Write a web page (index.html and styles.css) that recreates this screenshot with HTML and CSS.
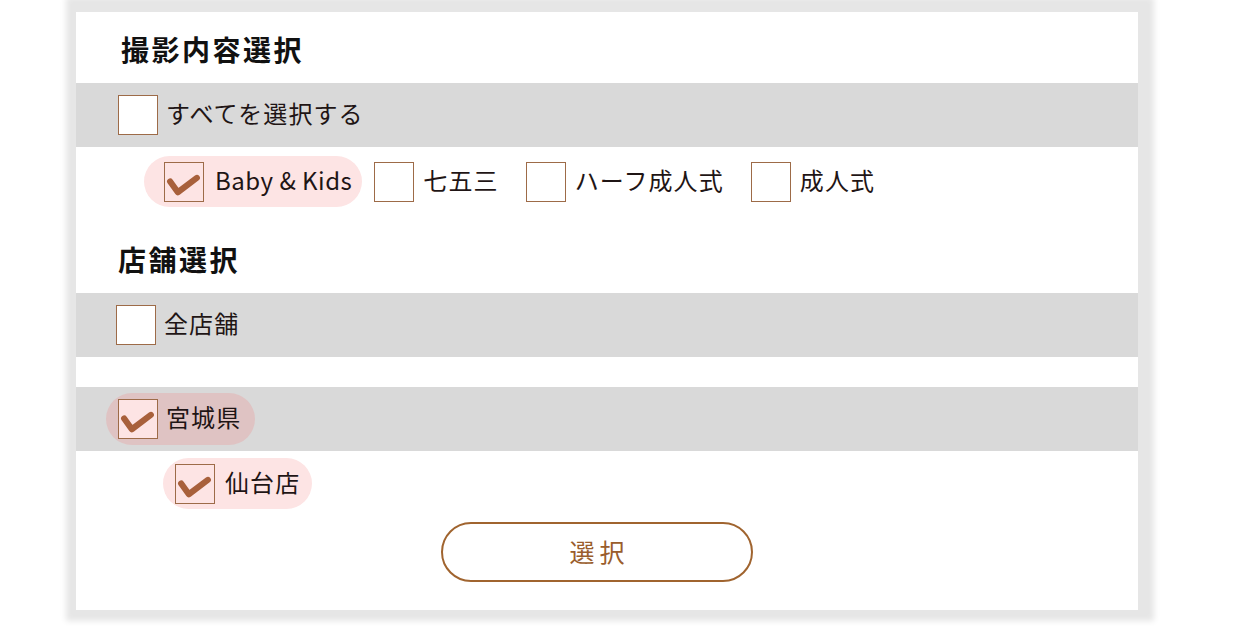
FILE: index.html
```html
<!DOCTYPE html>
<html lang="ja">
<head>
<meta charset="utf-8">
<link rel="stylesheet" href="styles.css">
</head>
<body>
<div class="panel">
  <h2 class="title t1">撮影内容選択</h2>
  <div class="band band-all">
    <label class="opt">
      <span class="box"></span><span class="txt">すべてを選択する</span>
    </label>
  </div>
  <div class="opts">
    <label class="opt on pill-baby">
      <span class="box on"><svg viewBox="0 0 37 37"><path d="M5 18 L12.5 28.5 L31 14.5"/></svg></span><span class="txt latin">Baby &amp; Kids</span>
    </label>
    <label class="opt plain">
      <span class="box"></span><span class="txt">七五三</span>
    </label>
    <label class="opt plain">
      <span class="box"></span><span class="txt">ハーフ成人式</span>
    </label>
    <label class="opt plain">
      <span class="box"></span><span class="txt">成人式</span>
    </label>
  </div>

  <h2 class="title t2">店舗選択</h2>
  <div class="band band-shops">
    <label class="opt">
      <span class="box"></span><span class="txt">全店舗</span>
    </label>
  </div>
  <div class="spacer"></div>
  <div class="band band-pref">
    <label class="opt on dark pill-pref">
      <span class="box on"><svg viewBox="0 0 37 37"><path d="M5 18 L12.5 28.5 L31 14.5"/></svg></span><span class="txt">宮城県</span>
    </label>
  </div>
  <div class="shop-row">
    <label class="opt on pill-shop">
      <span class="box on"><svg viewBox="0 0 37 37"><path d="M5 18 L12.5 28.5 L31 14.5"/></svg></span><span class="txt">仙台店</span>
    </label>
  </div>
  <div class="actions">
    <button class="submit">選択</button>
  </div>
</div>
</body>
</html>
```

FILE: styles.css
```css
* { box-sizing: border-box; }
html, body { margin: 0; padding: 0; background: #ffffff; }
body {
  font-family: "Noto Sans CJK JP", "Noto Sans", sans-serif;
  color: #1f1515;
  padding: 12px 0 0 76px;
  height: 626px;
  overflow: hidden;
}
.panel {
  width: 1062px;
  height: 598px;
  background: #ffffff;
  box-shadow: 3px -2px 6px 13px #e6e6e6;
  display: flex;
  flex-direction: column;
}
.title {
  margin: 0;
  font-size: 28px;
  line-height: 28px;
  font-weight: 700;
  letter-spacing: 2.5px;
  color: #111111;
}
.t1 { padding: 23px 0 0 45px; margin-bottom: 20px; }
.t2 { padding: 0 0 0 42px; margin-top: 38px; margin-bottom: 20px; }

.band {
  height: 64px;
  background: #d9d9d9;
  display: flex;
  align-items: center;
}
.band-all { padding-left: 42px; }
.band-shops { padding-left: 40px; }
.band-pref { padding-left: 30px; }
.spacer { height: 30px; }

.opt {
  display: flex;
  align-items: center;
  gap: 8px;
  font-size: 24px;
  line-height: 1;
  letter-spacing: 1.1px;
}
.txt { padding-bottom: 4px; }
.txt.latin { letter-spacing: 0.5px; }
.box {
  width: 40px;
  height: 40px;
  flex: none;
  border: 1.5px solid #9d6b48;
  background: #ffffff;
  display: flex;
}
.box.on { background: #fde4e4; }
.box svg { width: 100%; height: 100%; }
.box svg path {
  fill: none;
  stroke: #a8603b;
  stroke-width: 6;
  stroke-linecap: round;
  stroke-linejoin: round;
}

.opts {
  display: flex;
  align-items: center;
  gap: 12px;
  padding: 9px 0 0 68px;
  height: 60px;
}
.opt.on {
  height: 51px;
  border-radius: 26px;
  background: #fde4e4;
}
.pill-baby { padding: 0 10px 0 20px; gap: 11px; }
.opt.plain { gap: 9px; padding-right: 15px; }
.opt.dark { background: #dfc3c3; height: 52px; }
.pill-pref { padding: 0 14px 0 12px; }

.shop-row {
  padding: 7px 0 0 87px;
  display: flex;
}
.pill-shop { padding: 0 12px 0 12px; gap: 10px; }

.actions {
  padding: 13px 0 0 365px;
}
.submit {
  width: 312px;
  height: 60px;
  border: 2px solid #a0642f;
  border-radius: 30px;
  background: #ffffff;
  color: #9a5d2c;
  font-family: "Noto Sans CJK JP", "Noto Sans", sans-serif;
  font-size: 25px;
  letter-spacing: 5px;
  text-indent: 5px;
  padding: 0 0 3px 0;
  cursor: pointer;
}
```
